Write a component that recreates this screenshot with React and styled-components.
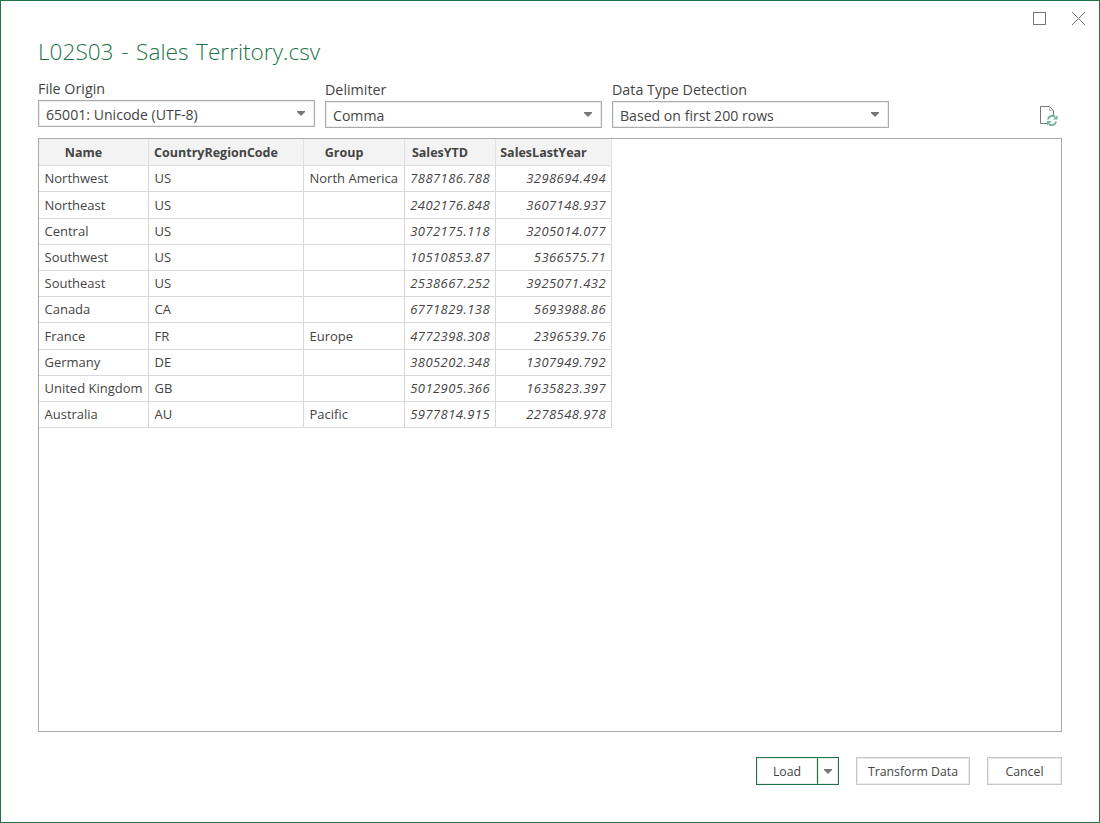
import React from 'react'
import styled, { createGlobalStyle } from 'styled-components'

const columns = [
    { key: 'name', title: 'Name', width: 110 },
    { key: 'code', title: 'CountryRegionCode', width: 155 },
    { key: 'group', title: 'Group', width: 101 },
    { key: 'ytd', title: 'SalesYTD', width: 91, number: true },
    { key: 'last', title: 'SalesLastYear', width: 116, number: true },
]

const rows = [
    ['Northwest', 'US', 'North America', '7887186.788', '3298694.494'],
    ['Northeast', 'US', '', '2402176.848', '3607148.937'],
    ['Central', 'US', '', '3072175.118', '3205014.077'],
    ['Southwest', 'US', '', '10510853.87', '5366575.71'],
    ['Southeast', 'US', '', '2538667.252', '3925071.432'],
    ['Canada', 'CA', '', '6771829.138', '5693988.86'],
    ['France', 'FR', 'Europe', '4772398.308', '2396539.76'],
    ['Germany', 'DE', '', '3805202.348', '1307949.792'],
    ['United Kingdom', 'GB', '', '5012905.366', '1635823.397'],
    ['Australia', 'AU', 'Pacific', '5977814.915', '2278548.978'],
]

const selects = [
    { label: 'File Origin', value: '65001: Unicode (UTF-8)', first: true },
    { label: 'Delimiter', value: 'Comma' },
    { label: 'Data Type Detection', value: 'Based on first 200 rows' },
]

function Caret() {
    return (
        <svg width="8" height="5" viewBox="0 0 8 5">
            <path d="M0 0h8v1L4 5 0 1z" fill="#777" />
        </svg>
    )
}

export default function App() {
    return (
        <Dialog>
            <GlobalStyle />
            <WindowBar>
                <svg width="13" height="13" viewBox="0 0 13 13">
                    <rect x="0.5" y="0.5" width="12" height="12" fill="none" stroke="#777" />
                </svg>
                <svg width="15" height="15" viewBox="0 0 15 15">
                    <path d="M1 1l13 13M14 1L1 14" fill="none" stroke="#777" />
                </svg>
            </WindowBar>
            <Title>L02S03 - Sales Territory.csv</Title>
            <Options>
                {selects.map((s) => (
                    <Field key={s.label} $first={s.first}>
                        <FieldLabel>{s.label}</FieldLabel>
                        <Select>
                            <SelectText>{s.value}</SelectText>
                            <Caret />
                        </Select>
                    </Field>
                ))}
                <RefreshIcon width="18" height="20" viewBox="0 0 18 20">
                    <path d="M.5 .5H9.5L13.5 4.5V9M.5 .5V17.5H7" fill="none" stroke="#777" />
                    <path d="M9.5 .5V4.5H13.5" fill="none" stroke="#bbb" />
                    <path d="M8 13.5a4.2 4.2 0 0 1 7-2.6" fill="none" stroke="#6fb298" strokeWidth="2" />
                    <path d="M17.5 9v4.5H13z" fill="#6fb298" />
                    <path d="M16 15.5a4.2 4.2 0 0 1-7 2.6" fill="none" stroke="#6fb298" strokeWidth="2" />
                    <path d="M7 19.5V15h4.5z" fill="#6fb298" />
                </RefreshIcon>
            </Options>
            <Preview>
                <Table>
                    {columns.map((c) => (
                        <HeadCell key={c.key}>{c.title}</HeadCell>
                    ))}
                    {rows.map((row) =>
                        row.map((value, i) => (
                            <Cell key={row[0] + i} $number={columns[i].number}>{value}</Cell>
                        ))
                    )}
                </Table>
            </Preview>
            <Footer>
                <SplitButton>
                    <LoadPart>Load</LoadPart>
                    <CaretPart><Caret /></CaretPart>
                </SplitButton>
                <Button $width={114}>Transform Data</Button>
                <Button $width={75}>Cancel</Button>
            </Footer>
        </Dialog>
    )
}

/**STYLED COMPONENTS */

const GlobalStyle = createGlobalStyle`
    html, body {
        margin: 0;
        background: #fff;
    }
    * {
        box-sizing: border-box;
    }
`

const Dialog = styled.div`
    width: 1100px;
    height: 823px;
    position: relative;
    padding: 0 37px;
    border: 1px solid #217346;
    background: #fff;
    font-family: 'Open Sans', 'Noto Sans', sans-serif;
    color: #444;
    overflow: hidden;
`

const WindowBar = styled.div`
    position: absolute;
    top: 10px;
    right: 13px;
    display: flex;
    align-items: center;
    gap: 25px;
`

const Title = styled.h1`
    margin: 34px 0 11px;
    height: 33px;
    font-size: 22.6px;
    line-height: 33px;
    font-weight: 300;
    word-spacing: 1.8px;
    color: #217346;
`

const Options = styled.div`
    display: flex;
    align-items: flex-start;
    gap: 10px;
    height: 59px;
`

const Field = styled.div`
    flex: none;
    width: 277px;
    margin-top: ${(p) => (p.$first ? 0 : 1)}px;
`

const FieldLabel = styled.div`
    height: 19px;
    margin-bottom: 2px;
    font-size: 14.3px;
    line-height: 19px;
    color: #444;
`

const Select = styled.div`
    height: 27px;
    display: flex;
    align-items: center;
    justify-content: space-between;
    padding: 0 9px 0 7px;
    border: 1px solid #ababab;
    box-shadow: inset 0 0 0 1px #ececec;
`

const SelectText = styled.span`
    padding-top: 1px;
    font-size: 14.1px;
    color: #444;
`

const RefreshIcon = styled.svg`
    flex: none;
    margin: 27px 0 0 141px;
`

const Preview = styled.div`
    width: 1024px;
    height: 594px;
    border: 1px solid #ababab;
`

const Table = styled.div`
    display: grid;
    width: max-content;
    grid-template-columns: ${columns.map((c) => c.width + 'px').join(' ')};
    grid-template-rows: 27.2px repeat(10, 26.2px);
`

const HeadCell = styled.div`
    display: flex;
    align-items: center;
    justify-content: center;
    padding: 0 20px 0 0;
    border-right: 1px solid #e0e0e0;
    border-bottom: 1px solid #e0e0e0;
    background: #f3f3f3;
    font-size: 12.5px;
    font-weight: 700;
    color: #444;
    white-space: nowrap;
`

const Cell = styled.div`
    display: flex;
    align-items: center;
    justify-content: ${(p) => (p.$number ? 'flex-end' : 'flex-start')};
    padding: 0 5px 0.6px 5.5px;
    border-right: 1px solid #d9d9d9;
    border-bottom: 1px solid #d9d9d9;
    font-size: 13px;
    font-style: ${(p) => (p.$number ? 'italic' : 'normal')};
    letter-spacing: ${(p) => (p.$number ? '0.45px' : '0')};
    color: #444;
    white-space: nowrap;
`

const Footer = styled.div`
    display: flex;
    justify-content: flex-end;
    gap: 17px;
    margin-top: 25px;
`

const Button = styled.div`
    width: ${(p) => p.$width}px;
    height: 28px;
    display: flex;
    align-items: center;
    justify-content: center;
    border: 1px solid #c6c6c6;
    box-shadow: inset 0 0 0 1px #ececec;
    font-size: 12.3px;
    color: #444;
`

const SplitButton = styled.div`
    display: flex;
    width: 83px;
    height: 28px;
    border: 1px solid #217346;
`

const LoadPart = styled.div`
    flex: 1;
    display: flex;
    align-items: center;
    justify-content: center;
    box-shadow: inset 0 0 0 1px #ececec;
    font-size: 12.3px;
    color: #444;
`

const CaretPart = styled.div`
    width: 21px;
    display: flex;
    align-items: center;
    justify-content: center;
    border-left: 1px solid #217346;
    box-shadow: inset 0 0 0 1px #ececec;
`
